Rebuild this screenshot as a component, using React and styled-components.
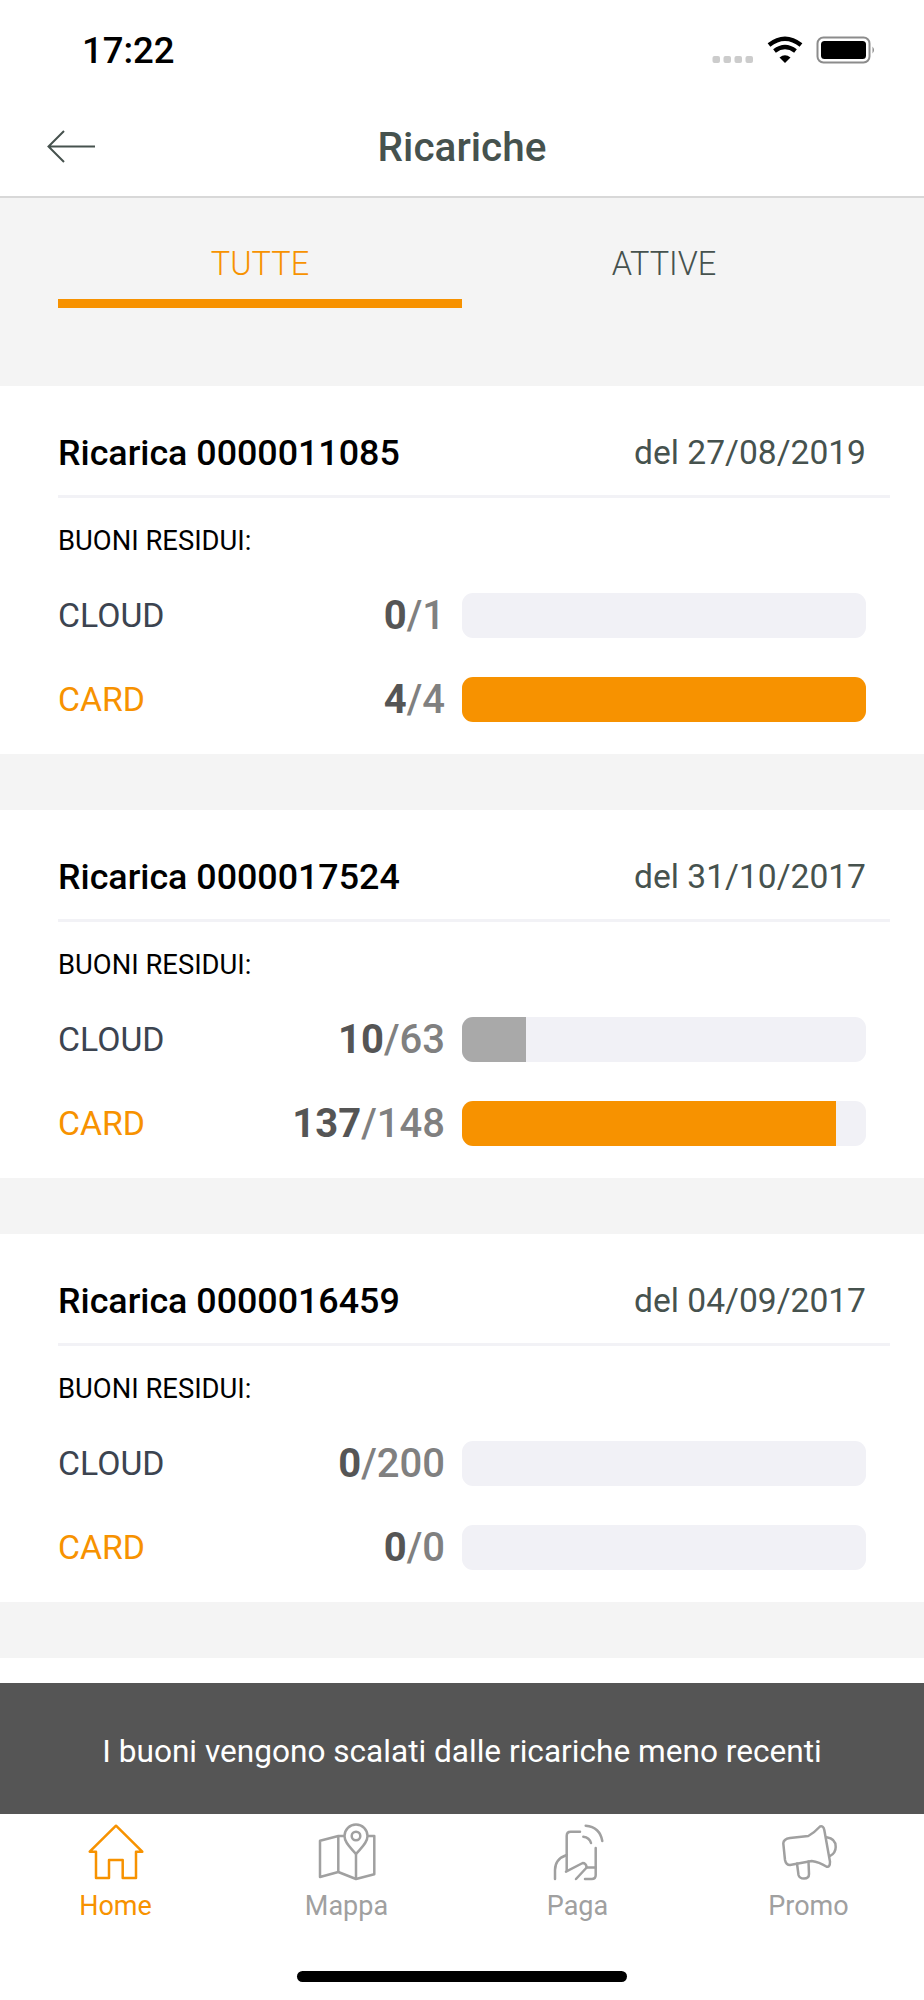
import React from 'react';
import styled, { createGlobalStyle } from 'styled-components';

const ORANGE = '#f79200';
const SLATE = '#46524e';

const recharges = [
	{
		id: '0000011085',
		date: '27/08/2019',
		cloud: [0, 1],
		card: [4, 4],
	},
	{
		id: '0000017524',
		date: '31/10/2017',
		cloud: [10, 63],
		card: [137, 148],
	},
	{
		id: '0000016459',
		date: '04/09/2017',
		cloud: [0, 200],
		card: [0, 0],
	},
];

function HomeIcon() {
	return (
		<svg width="60" height="60" viewBox="0 0 60 60" fill="none" stroke={ORANGE} strokeWidth="2.5" strokeLinejoin="round" strokeLinecap="round">
			<path d="M30 3.7 L3.7 29.7 H10 V56 H23 V38 H36.7 V56 H50 V29.7 H56.3 Z" />
		</svg>
	);
}

function MapIcon() {
	return (
		<svg width="60" height="60" viewBox="0 0 60 60" fill="none" stroke="#a0a0a0" strokeWidth="2.5" strokeLinejoin="round">
			<path d="M27 14 L21.3 14 L3 18.7 V55 L21.3 50 L39 57 L57.3 52.3 V14 L51 14" />
			<path d="M21.3 14 V50 M39 32 V57" />
			<path d="M39 32 C34 26 27.5 21 27.5 14 A11.5 11.5 0 0 1 50.5 14 C50.5 21 44 26 39 32 Z" fill="#fff" />
			<circle cx="39" cy="14" r="4.3" />
		</svg>
	);
}

function PayIcon() {
	return (
		<svg width="60" height="60" viewBox="0 0 60 60" fill="none" stroke="#a0a0a0" strokeWidth="2.5" strokeLinecap="round" strokeLinejoin="round">
			<path d="M32 9.7 H22.7 Q18.7 9.7 18.7 13.7 V48" />
			<path d="M47.7 26 V53 Q47.7 57 43.7 57 H37" />
			<path d="M7 57 V48 Q7 37 18.7 33" />
			<path d="M18 49.7 L34.7 41 Q38 41 38.7 45.5 L28 57" />
			<path d="M38.7 45.5 H47.7" />
			<path d="M35.3 14.7 Q41.5 15.5 43 21" />
			<path d="M37.7 3.7 Q52 5 54.3 19" />
		</svg>
	);
}

function PromoIcon() {
	return (
		<svg width="60" height="60" viewBox="0 0 60 60" fill="none" stroke="#a0a0a0" strokeWidth="2.5" strokeLinecap="round" strokeLinejoin="round">
			<path d="M4.3 21.3 Q4.5 17 11 16 L29.3 14 Q35 11 41 4.5 Q44.5 3.5 45.3 8 L51 39.7 Q51 45.5 47.7 44.7 Q40 40 32.7 39 L11 43 Q7 43 6 38 Z" />
			<path d="M18 41.5 L19.5 53 Q20.5 56.5 25 56.5 Q30 56.5 30 52 L29.5 39.5" />
			<path d="M47.7 15.3 Q56.7 16.5 56.7 25 Q56.7 31 51 34" />
		</svg>
	);
}

function StatusIcons() {
	return (
		<svg width="164" height="28" viewBox="0 0 164 28" fill="none">
			<g fill="#cccccc">
				<rect x="0.5" y="20" width="7.5" height="7" rx="2" />
				<rect x="11.5" y="20" width="7.5" height="7" rx="2" />
				<rect x="22.5" y="20" width="7.5" height="7" rx="2" />
				<rect x="33.5" y="20" width="7.5" height="7" rx="2" />
			</g>
			<path d="M57 9 Q73 -3.5 89 9 M62.5 15 Q73 7 83.5 15" stroke="#000" strokeWidth="4.4" />
			<path d="M73 27 L67.5 21.5 Q73 17 78.5 21.5 Z" fill="#000" />
			<rect x="105.5" y="1.5" width="52" height="25" rx="6" stroke="#8c8c8c" strokeWidth="2" />
			<rect x="109" y="5" width="45" height="18" rx="3.5" fill="#000" />
			<path d="M160.5 10.5 Q163.5 14 160.5 17.5 Z" fill="#8c8c8c" />
		</svg>
	);
}

function BackArrow() {
	return (
		<svg width="50" height="36" viewBox="0 0 50 36" fill="none" stroke={SLATE} strokeWidth="2">
			<path d="M18 2 L2.5 17.5 L18 33 M2.5 17.5 H49" />
		</svg>
	);
}

function Usage({ name, values, accent }) {
	const [left, total] = values;
	const percent = total > 0 ? (left / total) * 100 : 0;
	return (
		<UsageRow>
			<UsageName $accent={accent}>{name}</UsageName>
			<Count>
				<strong>{left}</strong>/{total}
			</Count>
			<Track>
				{percent > 0 && <Fill $accent={accent} style={{ width: `${percent}%` }} />}
			</Track>
		</UsageRow>
	);
}

function App() {
	return (
		<Page>
			<GlobalStyle />
			<StatusBar>
				<Clock>17:22</Clock>
				<StatusIcons />
			</StatusBar>
			<Header>
				<BackButton>
					<BackArrow />
				</BackButton>
				<Title>Ricariche</Title>
			</Header>
			<Tabs>
				<Tab $active>TUTTE</Tab>
				<Tab>ATTIVE</Tab>
			</Tabs>
			<List>
				{recharges.map(item => (
					<Card key={item.id}>
						<CardHead>
							<CardTitle>Ricarica {item.id}</CardTitle>
							<CardDate>del {item.date}</CardDate>
						</CardHead>
						<Residual>BUONI RESIDUI:</Residual>
						<Usages>
							<Usage name="CLOUD" values={item.cloud} />
							<Usage name="CARD" values={item.card} accent />
						</Usages>
					</Card>
				))}
				<NextCard />
				<Toast>I buoni vengono scalati dalle ricariche meno recenti</Toast>
			</List>
			<TabBar>
				<NavItems>
					<NavItem $active>
						<HomeIcon />
						<NavLabel>Home</NavLabel>
					</NavItem>
					<NavItem>
						<MapIcon />
						<NavLabel>Mappa</NavLabel>
					</NavItem>
					<NavItem>
						<PayIcon />
						<NavLabel>Paga</NavLabel>
					</NavItem>
					<NavItem>
						<PromoIcon />
						<NavLabel>Promo</NavLabel>
					</NavItem>
				</NavItems>
				<HomeIndicator />
			</TabBar>
		</Page>
	);
}

export default App;

const GlobalStyle = createGlobalStyle`
	html, body {
		margin: 0;
		padding: 0;
		background: #fff;
	}
	* {
		box-sizing: border-box;
	}
`;

const Page = styled.div`
	width: 924px;
	height: 2000px;
	display: flex;
	flex-direction: column;
	overflow: hidden;
	background: #fff;
	font-family: Roboto, 'Liberation Sans', sans-serif;
`;

const StatusBar = styled.div`
	height: 100px;
	flex: none;
	display: flex;
	align-items: center;
	justify-content: space-between;
	padding: 0 48px 0 82px;
`;

const Clock = styled.div`
	font-size: 36.5px;
	font-weight: 500;
	color: #000;
`;

const Header = styled.div`
	height: 98px;
	flex: none;
	display: flex;
	align-items: center;
	justify-content: center;
	padding-bottom: 2px;
	border-bottom: 2px solid #d8d8d8;
	position: relative;
`;

const BackButton = styled.div`
	position: absolute;
	left: 46px;
	top: 29px;
	display: flex;
`;

const Title = styled.div`
	font-size: 40.5px;
	font-weight: 500;
	color: ${SLATE};
`;

const Tabs = styled.div`
	flex: none;
	display: grid;
	grid-template-columns: 404px 404px;
	padding: 0 58px 78px;
	background: #f4f4f4;
`;

const Tab = styled.div`
	height: 110px;
	padding-top: 46px;
	line-height: 40px;
	text-align: center;
	font-size: 32.5px;
	font-weight: 300;
	color: ${props => (props.$active ? ORANGE : SLATE)};
	border-bottom: 9px solid ${props => (props.$active ? ORANGE : 'transparent')};
`;

const List = styled.div`
	flex: 1;
	min-height: 0;
	position: relative;
	overflow: hidden;
	background: #f4f4f4;
`;

const Card = styled.div`
	background: #fff;
	padding: 0 34px 33px 58px;
	margin-bottom: 56px;
`;

const NextCard = styled.div`
	background: #fff;
	height: 160px;
`;

const CardHead = styled.div`
	height: 112px;
	padding-top: 44px;
	display: flex;
	justify-content: space-between;
	padding-right: 24px;
	border-bottom: 3px solid #f2f2f6;
`;

const CardTitle = styled.div`
	font-size: 35.8px;
	line-height: 46px;
	font-weight: 500;
	color: #000;
`;

const CardDate = styled.div`
	font-size: 33.6px;
	line-height: 46px;
	color: ${SLATE};
`;

const Residual = styled.div`
	margin-top: 28px;
	font-size: 27.4px;
	line-height: 30px;
	color: #000;
`;

const Usages = styled.div`
	margin-top: 36px;
	display: flex;
	flex-direction: column;
	gap: 39px;
	padding-right: 24px;
`;

const UsageRow = styled.div`
	display: grid;
	grid-template-columns: 1fr auto 404px;
	column-gap: 17px;
	align-items: center;
	height: 45px;
`;

const UsageName = styled.div`
	font-size: 33.8px;
	color: ${props => (props.$accent ? ORANGE : '#3c4450')};
`;

const Count = styled.div`
	font-size: 40px;
	font-weight: 500;
	color: #808080;
	strong {
		font-weight: 700;
		color: #555;
	}
`;

const Track = styled.div`
	height: 45px;
	border-radius: 11px;
	overflow: hidden;
	background: #f1f1f6;
`;

const Fill = styled.div`
	height: 100%;
	background: ${props => (props.$accent ? ORANGE : '#a9a9a9')};
`;

const Toast = styled.div`
	position: absolute;
	left: 0;
	right: 0;
	bottom: 0;
	height: 131px;
	display: flex;
	align-items: center;
	justify-content: center;
	padding-top: 6px;
	background: #555;
	color: #fff;
	font-size: 31.6px;
`;

const TabBar = styled.div`
	height: 186px;
	flex: none;
	display: flex;
	flex-direction: column;
	padding-top: 8px;
	background: #fff;
`;

const NavItems = styled.div`
	display: grid;
	grid-template-columns: repeat(4, 231px);
`;

const NavItem = styled.div`
	display: flex;
	flex-direction: column;
	align-items: center;
	color: ${props => (props.$active ? ORANGE : '#a0a0a0')};
`;

const NavLabel = styled.div`
	margin-top: 9px;
	font-size: 27px;
	line-height: 30px;
`;

const HomeIndicator = styled.div`
	width: 330px;
	height: 11px;
	margin: 50px auto 0;
	border-radius: 6px;
	background: #000;
`;
